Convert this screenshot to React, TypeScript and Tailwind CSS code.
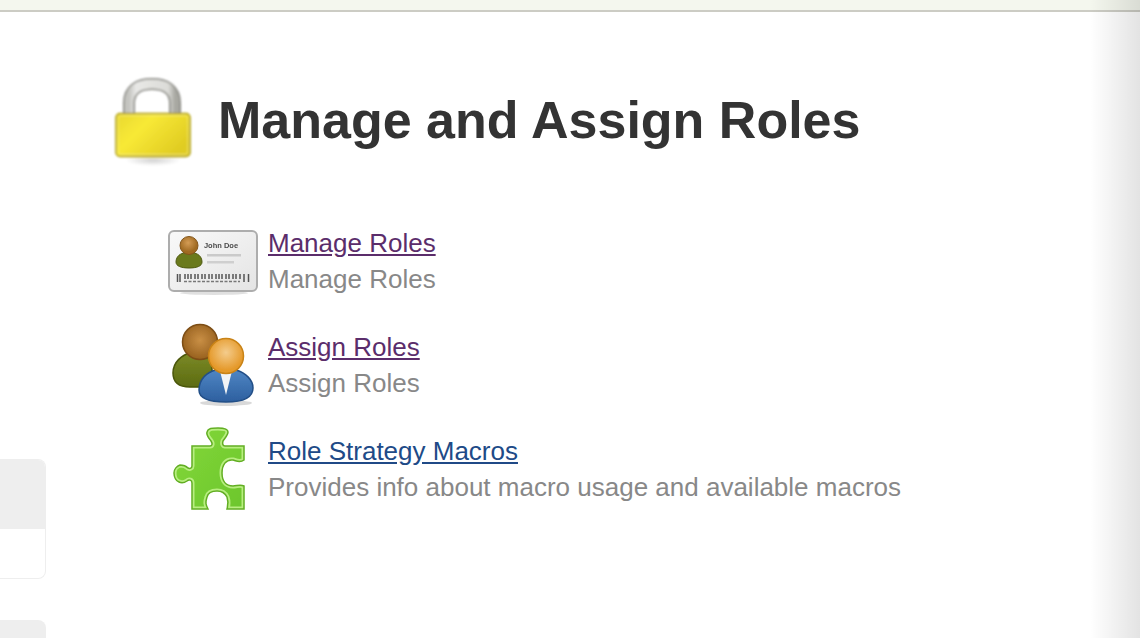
import React from "react";

function Lock() {
  return (
    <svg width="80" height="92" viewBox="0 0 80 92" className="shrink-0">
      <defs>
        <linearGradient id="lk" x1="0" y1="0" x2="1" y2="0.6"><stop offset="0" stopColor="#e8d830" /><stop offset="0.4" stopColor="#f8e936" /><stop offset="1" stopColor="#e0cc22" /></linearGradient>
        <linearGradient id="sh" x1="0" y1="0" x2="1" y2="0"><stop offset="0" stopColor="#c4c4c0" /><stop offset="0.15" stopColor="#e8e8e6" /><stop offset="0.85" stopColor="#dcdcd8" /><stop offset="1" stopColor="#a8a8a2" /></linearGradient>
        <radialGradient id="ls"><stop offset="0" stopColor="#000" stopOpacity="0.18" /><stop offset="1" stopColor="#000" stopOpacity="0" /></radialGradient>
        <filter id="b1"><feGaussianBlur stdDeviation="0.8" /></filter>
      </defs>
      <g filter="url(#b1)">
        <ellipse cx="40" cy="85" rx="28" ry="6" fill="url(#ls)" />
        <path d="M16 42V28C16 14 26 9 39 9S62 14 62 28V42" fill="none" stroke="#85857f" strokeWidth="12" />
        <path d="M16 42V28C16 14 26 9 39 9S62 14 62 28V42" fill="none" stroke="url(#sh)" strokeWidth="9" />
        <rect x="3" y="38.500" width="74" height="43" rx="4" fill="url(#lk)" stroke="#ab9a12" strokeWidth="1.500" />
        <rect x="5" y="40.500" width="70" height="39" rx="3" fill="none" stroke="#f8f08a" strokeWidth="1" opacity="0.7" />
      </g>
    </svg>
  );
}

function Card() {
  return (
    <svg width="92" height="75" viewBox="8 0 92 75" className="mt-[5px] shrink-0">
      <defs>
        <linearGradient id="cd" x1="0" y1="0" x2="1" y2="1"><stop offset="0" stopColor="#f9f9f9" /><stop offset="1" stopColor="#e4e4e4" /></linearGradient>
        <radialGradient id="hd" cx="0.45" cy="0.35"><stop offset="0" stopColor="#d49c55" /><stop offset="1" stopColor="#a06a22" /></radialGradient>
        <filter id="b2"><feGaussianBlur stdDeviation="0.6" /></filter>
        <filter id="b2t"><feGaussianBlur stdDeviation="0.35" /></filter>
      </defs>
      <g filter="url(#b2)">
        <ellipse cx="54" cy="73" rx="34" ry="2" fill="#000" opacity="0.12" />
        <rect x="9" y="11" width="88" height="60" rx="5" fill="url(#cd)" stroke="#adadad" strokeWidth="2" />
        <path d="M16 42c0-6 5-9 9-9h8c4 0 9 3 9 9 0 4-5 6-13 6s-13-2-13-6z" fill="#6b7a1c" stroke="#4e5a10" />
        <circle cx="29" cy="25.500" r="9" fill="url(#hd)" stroke="#83551a" />
        <rect x="47" y="34" width="34" height="2.500" fill="#cacaca" />
        <rect x="47" y="41" width="27" height="2.500" fill="#cfcfcf" />
        <path d="M17.500 54v8M20 54v8M25 54v5M28 54v5M31 54v5M35 54v5M38 54v5M42 54v5M45 54v5M49 54v5M52 54v5M56 54v5M59 54v5M62 54v5M66 54v5M69 54v5M73 54v5M76 54v5M80 54v5M84 54v8M88.500 54v8" stroke="#555" strokeWidth="1.500" />
        <path d="M24 61.500h56" stroke="#777" strokeWidth="1.500" strokeDasharray="3 1.500" />
      </g>
      <text x="61" y="27.500" textAnchor="middle" filter="url(#b2t)" fontFamily="Liberation Sans, sans-serif" fontSize="7.500" fontWeight="700" fill="#4a4a4a">John Doe</text>
    </svg>
  );
}

function Users() {
  return (
    <svg width="92" height="92" viewBox="8 4 92 92" className="shrink-0">
      <defs>
        <radialGradient id="h1" cx="0.5" cy="0.45"><stop offset="0" stopColor="#c98f45" /><stop offset="1" stopColor="#9c6522" /></radialGradient>
        <radialGradient id="h2" cx="0.5" cy="0.4"><stop offset="0" stopColor="#f4cc8c" /><stop offset="1" stopColor="#e59a2c" /></radialGradient>
        <linearGradient id="bl" x1="0" y1="0" x2="0" y2="1"><stop offset="0" stopColor="#4f86c4" /><stop offset="1" stopColor="#2d5f9f" /></linearGradient>
        <linearGradient id="gr" x1="0" y1="0" x2="0" y2="1"><stop offset="0" stopColor="#7b8a26" /><stop offset="1" stopColor="#5c6b12" /></linearGradient>
        <filter id="b3"><feGaussianBlur stdDeviation="0.7" /></filter>
      </defs>
      <g filter="url(#b3)">
        <ellipse cx="66" cy="88" rx="26" ry="3" fill="#000" opacity="0.15" />
        <path d="M13 58C13 47 22 40 30 38H52V72H30C20 72 13 68 13 58Z" fill="url(#gr)" stroke="#4a5608" strokeWidth="1.500" />
        <circle cx="40" cy="27" r="17.500" fill="url(#h1)" stroke="#7d4e14" strokeWidth="1.500" />
        <path d="M39 75C39 64 47 57 56 55L76 55C86 58 93 65 93 73C93 83 82 87 66 87C50 87 39 84 39 75Z" fill="url(#bl)" stroke="#234f87" strokeWidth="1.500" />
        <path d="M60 56H72L69 68L66 80L63 68Z" fill="#f2f4f6" />
        <circle cx="66" cy="41" r="17.500" fill="url(#h2)" stroke="#c98318" strokeWidth="1.500" />
      </g>
    </svg>
  );
}

function Puzzle() {
  const d =
    "M32 25H50C52 25 53 23 51 20C48 16 46 14 47 11C48 7 52 7 58 7C64 7 68 8 68 11C68 14 65 17 63 20C62 23 63 25 65 25H84V39C80 42 77 40 73 39C66 38 62 44 62 52C62 60 66 65 73 65C77 65 80 63 84 65V88H67C68 84 69 82 67 76C65 72 61 70 57 70C52 70 48 72 47 76C45 82 46 84 48 88H32V62C32 59 29 58 27 60C24 62 21 62 19 61C16 60 14 56 14 52C14 48 17 45 20 44C23 44 26 45 28 47C30 48 32 47 32 45Z";
  return (
    <svg width="92" height="92" viewBox="8 2 92 92" className="shrink-0">
      <defs>
        <linearGradient id="pz" x1="0" y1="0" x2="1" y2="1"><stop offset="0" stopColor="#84d83a" /><stop offset="1" stopColor="#6cc62c" /></linearGradient>
        <clipPath id="pzc"><path d={d} /></clipPath>
        <filter id="b4"><feGaussianBlur stdDeviation="0.5" /></filter>
      </defs>
      <g filter="url(#b4)">
        <path d={d} fill="url(#pz)" />
        <path d={d} fill="none" stroke="#b8ee80" strokeWidth="5" clipPath="url(#pzc)" />
        <path d={d} fill="none" stroke="#62ae24" strokeWidth="1.500" />
      </g>
    </svg>
  );
}

function Item({ icon, title, desc, color }: { icon: React.ReactNode; title: string; desc: string; color: string }) {
  return (
    <div className="flex h-[104px] items-start">
      <div className="flex w-[100px] shrink-0 justify-start">{icon}</div>
      <div className="pt-[10px]">
        <a href="#" className={`block text-[26px] leading-[36px] underline ${color}`}>{title}</a>
        <div className="text-[26px] leading-[36px] text-[#888888]">{desc}</div>
      </div>
    </div>
  );
}

export default function App() {
  return (
    <div className="relative flex h-[638px] w-[1140px] flex-col overflow-hidden bg-white font-['Liberation_Sans',Arial,sans-serif]">
      <div className="h-3 shrink-0 border-b-2 border-[#ccccc4] bg-[#f4f7ee]" />
      <div className="flex flex-1">
        <aside className="flex w-[46px] shrink-0 flex-col gap-[41px] pt-[447px]">
          <div className="h-[120px] overflow-hidden rounded-r-lg border border-l-0 border-[#eeeeee]">
            <div className="h-[69px] bg-[#eeeeee]" />
          </div>
          <div className="h-[40px] rounded-tr-lg bg-[#eeeeee]" />
        </aside>
        <main className="flex-1 pl-[67px]">
          <div className="flex h-[203px] items-start pt-[63px]">
            <div className="w-[105px] shrink-0"><Lock /></div>
            <h1 className="pt-[15px] text-[52px] font-bold leading-[60px] text-[#333333]">Manage and Assign Roles</h1>
          </div>
          <div className="pl-[55px]">
            <Item icon={<Card />} title="Manage Roles" desc="Manage Roles" color="text-[#5b2d6b]" />
            <Item icon={<Users />} title="Assign Roles" desc="Assign Roles" color="text-[#5b2d6b]" />
            <Item icon={<Puzzle />} title="Role Strategy Macros" desc="Provides info about macro usage and available macros" color="text-[#204a87]" />
          </div>
        </main>
      </div>
      <div className="pointer-events-none absolute inset-y-0 right-0 w-[50px] bg-gradient-to-r from-[#00000000] to-[#0000001c]" />
    </div>
  );
}
